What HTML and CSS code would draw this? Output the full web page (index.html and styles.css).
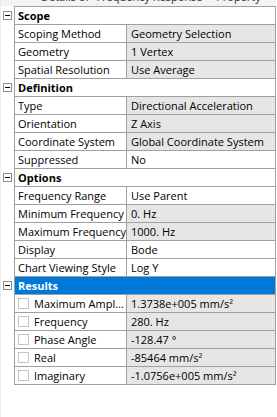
FILE: index.html
```html
<!DOCTYPE html>
<html>
<head>
<meta charset="utf-8">
<link rel="stylesheet" href="styles.css">
</head>
<body>
<div class="panel">
  <div class="titlebar"><span class="title">Details of "Frequency Response" - Property</span></div>
  <div class="sheet">
    <div class="row"><div class="gutter"><span class="toggle"></span></div><div class="cell head">Scope</div></div>
    <div class="row"><div class="gutter"></div><div class="cell label">Scoping Method</div><div class="cell value ro">Geometry Selection</div></div>
    <div class="row"><div class="gutter"></div><div class="cell label">Geometry</div><div class="cell value ro">1 Vertex</div></div>
    <div class="row"><div class="gutter"></div><div class="cell label">Spatial Resolution</div><div class="cell value ro">Use Average</div></div>

    <div class="row"><div class="gutter"><span class="toggle"></span></div><div class="cell head">Definition</div></div>
    <div class="row"><div class="gutter"></div><div class="cell label">Type</div><div class="cell value ro">Directional Acceleration</div></div>
    <div class="row"><div class="gutter"></div><div class="cell label">Orientation</div><div class="cell value ro">Z Axis</div></div>
    <div class="row"><div class="gutter"></div><div class="cell label">Coordinate System</div><div class="cell value ro">Global Coordinate System</div></div>
    <div class="row"><div class="gutter"></div><div class="cell label">Suppressed</div><div class="cell value">No</div></div>

    <div class="row"><div class="gutter"><span class="toggle"></span></div><div class="cell head">Options</div></div>
    <div class="row"><div class="gutter"></div><div class="cell label">Frequency Range</div><div class="cell value">Use Parent</div></div>
    <div class="row"><div class="gutter"></div><div class="cell label">Minimum Frequency</div><div class="cell value ro">0. Hz</div></div>
    <div class="row"><div class="gutter"></div><div class="cell label">Maximum Frequency</div><div class="cell value ro">1000. Hz</div></div>
    <div class="row"><div class="gutter"></div><div class="cell label">Display</div><div class="cell value">Bode</div></div>
    <div class="row"><div class="gutter"></div><div class="cell label">Chart Viewing Style</div><div class="cell value">Log Y</div></div>

    <div class="row"><div class="gutter"><span class="toggle"></span></div><div class="cell head selected">Results</div></div>
    <div class="row"><div class="gutter"></div><div class="cell label check"><span class="box"></span><span class="txt">Maximum Amplitude</span></div><div class="cell value ro">1.3738e+005 mm/s²</div></div>
    <div class="row"><div class="gutter"></div><div class="cell label check"><span class="box"></span><span class="txt">Frequency</span></div><div class="cell value ro">280. Hz</div></div>
    <div class="row"><div class="gutter"></div><div class="cell label check"><span class="box"></span><span class="txt">Phase Angle</span></div><div class="cell value ro">-128.47 °</div></div>
    <div class="row"><div class="gutter"></div><div class="cell label check"><span class="box"></span><span class="txt">Real</span></div><div class="cell value ro">-85464 mm/s²</div></div>
    <div class="row"><div class="gutter"></div><div class="cell label check"><span class="box"></span><span class="txt">Imaginary</span></div><div class="cell value ro">-1.0756e+005 mm/s²</div></div>
  </div>
</div>
</body>
</html>
```

FILE: styles.css
```css
html, body {
  margin: 0;
  padding: 0;
  background: #ffffff;
}

body {
  font-family: "Open Sans", "Noto Sans", sans-serif;
  font-size: 11px;
  color: #000000;
}

.panel {
  width: 276px;
  height: 417px;
  border-left: 1px solid #ececec;
  box-sizing: border-box;
}

.titlebar {
  height: 6px;
  overflow: hidden;
  background: #f3f3f3;
  padding-left: 40px;
}

.title {
  display: block;
  line-height: 16px;
  margin-top: -11px;
  white-space: nowrap;
  color: #333333;
}

.sheet {
  display: flex;
  flex-direction: column;
}

.row {
  display: flex;
  height: 18px;
}

.row:first-child {
  height: 19px;
}

.row:first-child > .cell {
  border-top: 1px solid #a0a0a0;
}

.row:first-child > .gutter {
  border-top: 1px solid transparent;
}

.gutter {
  width: 13px;
  flex: none;
  height: 17px;
  border-bottom: 1px solid transparent;
  display: flex;
  align-items: center;
}

.toggle {
  width: 9px;
  height: 9px;
  box-sizing: border-box;
  border: 1px solid #8c8c8c;
  margin-left: 2px;
  position: relative;
  background: #ffffff;
}

.toggle::after {
  content: "";
  position: absolute;
  left: 1px;
  top: 3px;
  width: 5px;
  height: 1px;
  background: #000000;
}

.cell {
  height: 17px;
  line-height: 17px;
  border-left: 1px solid #a0a0a0;
  border-bottom: 1px solid #a0a0a0;
  white-space: nowrap;
  overflow: hidden;
}

.label {
  flex: none;
  padding-left: 3px;
  width: 108px;
}

.value {
  flex: 1;
  padding-left: 4px;
  border-right: 1px solid #a0a0a0;
}

.value.ro {
  background: #e6e6e6;
}

.head {
  flex: 1;
  padding-left: 3px;
  font-weight: bold;
  border-right: 1px solid #a0a0a0;
}

.head.selected {
  background: #0078d7;
  color: #ffffff;
}

.check {
  display: flex;
  align-items: center;
  gap: 5px;
}

.box {
  width: 11px;
  height: 11px;
  box-sizing: border-box;
  border: 1px solid #c4c4c4;
  background: #ffffff;
  flex: none;
}

.txt {
  overflow: hidden;
  text-overflow: ellipsis;
  white-space: nowrap;
  min-width: 0;
  padding-right: 2px;
}
```
